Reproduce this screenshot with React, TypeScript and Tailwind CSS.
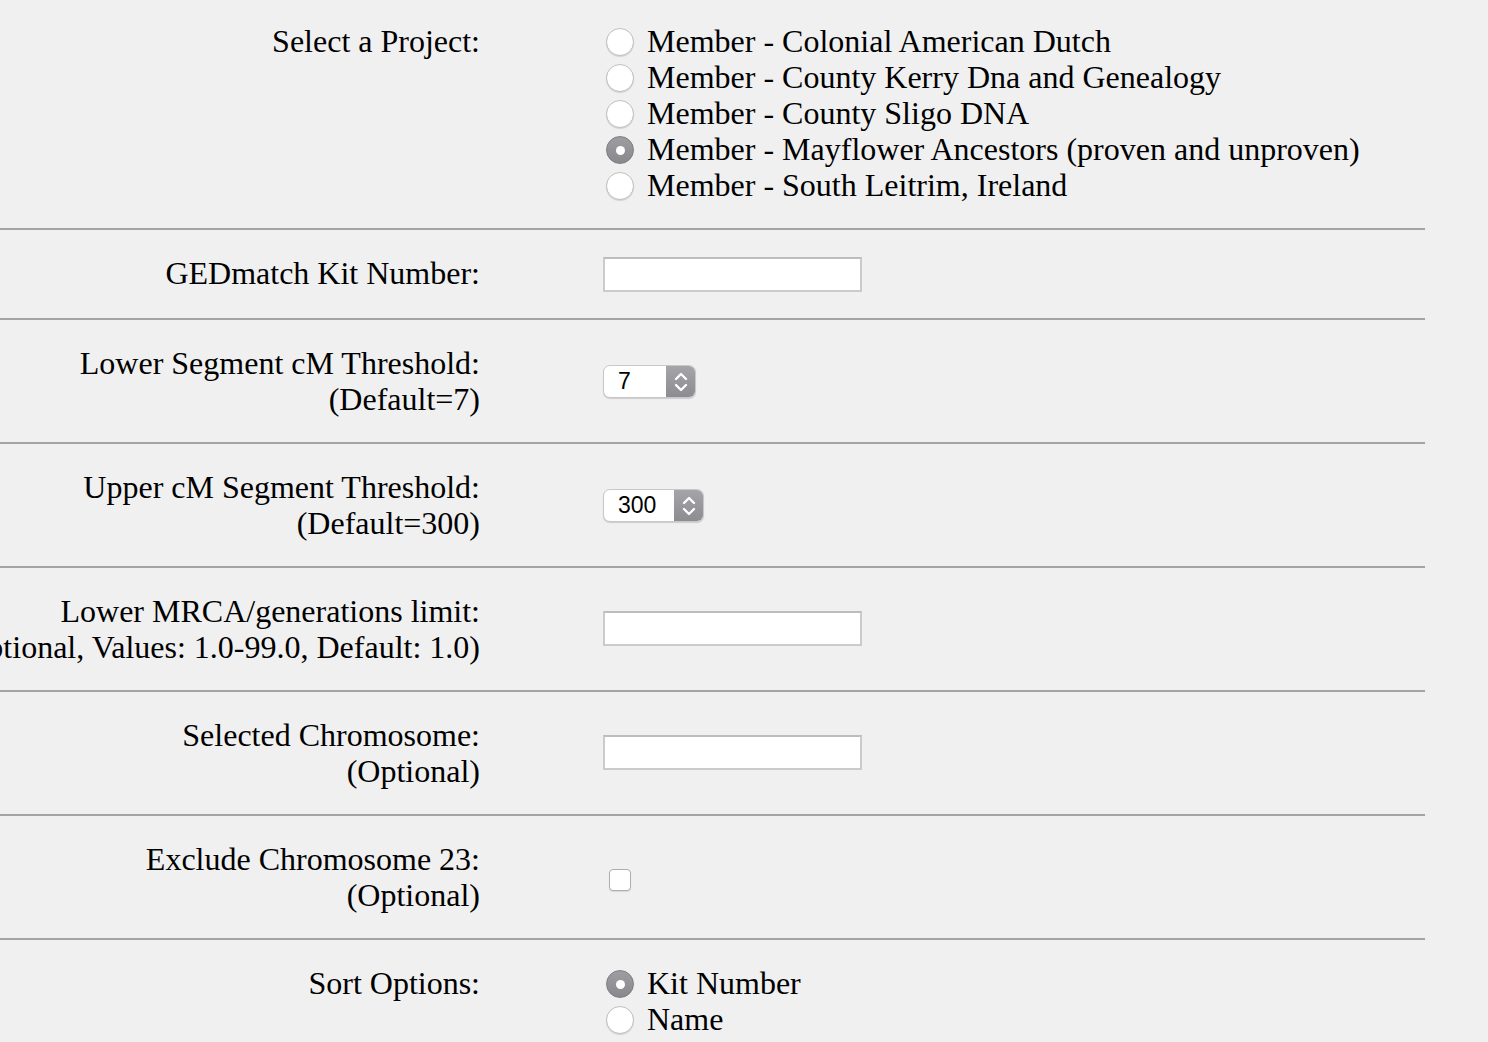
import React from "react";

const serif = { fontFamily: '"Liberation Serif", "Times New Roman", serif' };

const Radio = ({ checked }: { checked?: boolean }) =>
  checked ? (
    <span className="ml-[3px] mr-[13px] mt-[2px] flex h-[28px] w-[28px] shrink-0 items-center justify-center rounded-full border border-[#7d7d82] bg-gradient-to-b from-[#9d9da2] to-[#88888d]">
      <span className="h-[9px] w-[9px] rounded-full bg-white" />
    </span>
  ) : (
    <span className="ml-[3px] mr-[13px] mt-[2px] h-[28px] w-[28px] shrink-0 rounded-full border-[1.5px] border-[#bfbfbf] bg-white shadow-[0_1px_1px_rgba(0,0,0,0.12)]" />
  );

const RadioList = ({ items, selected }: { items: string[]; selected: number }) => (
  <div className="flex flex-col">
    {items.map((t, i) => (
      <label key={t} className="flex h-[36px] items-center whitespace-nowrap text-[32px] leading-[36px] text-black">
        <Radio checked={i === selected} />
        <span>{t}</span>
      </label>
    ))}
  </div>
);

const TextBox = ({ top }: { top: string }) => (
  <div className={`${top} h-[35px] w-[259px] border-2 border-[#cbcbcb] border-t-[#bdbdbd] bg-white`} />
);

const Stepper = ({ value, width }: { value: string; width: string }) => (
  <div
    className={`${width} mt-[20px] flex h-[33px] overflow-hidden rounded-[7px] border border-[#c8c8c8] bg-white shadow-[0_1px_1px_rgba(0,0,0,0.15)]`}
  >
    <span
      className="flex-1 pl-[14px] text-[23px] leading-[31px] text-black"
      style={{ fontFamily: '"Liberation Sans", Arial, sans-serif' }}
    >
      {value}
    </span>
    <span className="flex w-[29px] items-center justify-center bg-gradient-to-b from-[#a4a4a9] to-[#8c8c91]">
      <svg width="16" height="26" viewBox="0 0 16 26" fill="none" stroke="white" strokeWidth="2.4" strokeLinecap="round" strokeLinejoin="round">
        <path d="M3 10 8 5 13 10" />
        <path d="M3 16 8 21 13 16" />
      </svg>
    </span>
  </div>
);

const Row = ({
  lines,
  children,
  className,
}: {
  lines: string[];
  children: React.ReactNode;
  className: string;
}) => (
  <div className={`flex w-[1425px] items-start border-b-2 border-[#a3a3a3] ${className}`}>
    <div className="flex w-[480px] shrink-0 flex-col items-end text-[32px] leading-[36px] text-black">
      {lines.map((l) => (
        <div key={l} className="whitespace-nowrap">
          {l}
        </div>
      ))}
    </div>
    <div className="ml-[123px] flex flex-col">{children}</div>
  </div>
);

export default function App() {
  return (
    <div className="min-h-[1042px] w-full overflow-hidden bg-[#f0f0f0]" style={serif}>
      <Row lines={["Select a Project:"]} className="pt-[23px] pb-[25px]">
        <RadioList
          selected={3}
          items={[
            "Member - Colonial American Dutch",
            "Member - County Kerry Dna and Genealogy",
            "Member - County Sligo DNA",
            "Member - Mayflower Ancestors (proven and unproven)",
            "Member - South Leitrim, Ireland",
          ]}
        />
      </Row>
      <Row lines={["GEDmatch Kit Number:"]} className="pt-[25px] pb-[26px]">
        <TextBox top="mt-[2px]" />
      </Row>
      <Row lines={["Lower Segment cM Threshold:", "(Default=7)"]} className="pt-[25px] pb-[25px]">
        <Stepper value="7" width="w-[93px]" />
      </Row>
      <Row lines={["Upper cM Segment Threshold:", "(Default=300)"]} className="pt-[25px] pb-[25px]">
        <Stepper value="300" width="w-[101px]" />
      </Row>
      <Row
        lines={["Lower MRCA/generations limit:", "(Optional, Values: 1.0-99.0, Default: 1.0)"]}
        className="pt-[25px] pb-[25px]"
      >
        <TextBox top="mt-[18px]" />
      </Row>
      <Row lines={["Selected Chromosome:", "(Optional)"]} className="pt-[25px] pb-[25px]">
        <TextBox top="mt-[18px]" />
      </Row>
      <Row lines={["Exclude Chromosome 23:", "(Optional)"]} className="pt-[25px] pb-[25px]">
        <span className="ml-[6px] mt-[28px] h-[22px] w-[22px] rounded-[4px] border-[1.5px] border-[#adadad] bg-white shadow-[0_1px_1px_rgba(0,0,0,0.1)]" />
      </Row>
      <div className="flex w-[1425px] items-start pt-[25px]">
        <div className="flex w-[480px] shrink-0 flex-col items-end text-[32px] leading-[36px] text-black">
          <div className="whitespace-nowrap">Sort Options:</div>
        </div>
        <div className="ml-[123px]">
          <RadioList selected={0} items={["Kit Number", "Name"]} />
        </div>
      </div>
    </div>
  );
}
